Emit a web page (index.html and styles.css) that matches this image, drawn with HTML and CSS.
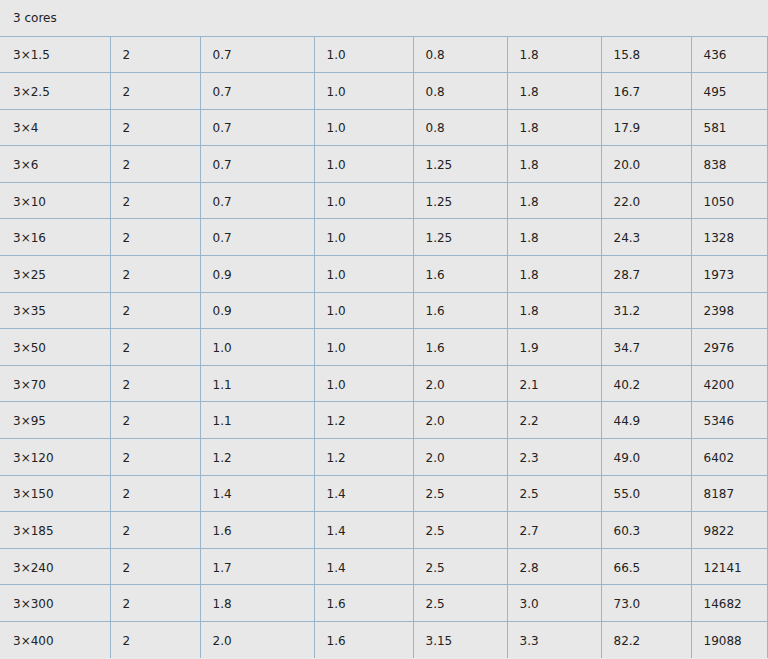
FILE: index.html
```html
<!DOCTYPE html>
<html>
<head>
<meta charset="utf-8">
<link rel="stylesheet" href="styles.css">
</head>
<body>
<table class="cable">
<colgroup>
<col class="c1"><col class="c2"><col class="c3"><col class="c4"><col class="c5"><col class="c6"><col class="c7"><col class="c8">
</colgroup>
<thead>
<tr class="head"><th colspan="8">3 cores</th></tr>
</thead>
<tbody>
<tr><td>3×1.5</td><td>2</td><td>0.7</td><td>1.0</td><td>0.8</td><td>1.8</td><td>15.8</td><td>436</td></tr>
<tr><td>3×2.5</td><td>2</td><td>0.7</td><td>1.0</td><td>0.8</td><td>1.8</td><td>16.7</td><td>495</td></tr>
<tr><td>3×4</td><td>2</td><td>0.7</td><td>1.0</td><td>0.8</td><td>1.8</td><td>17.9</td><td>581</td></tr>
<tr><td>3×6</td><td>2</td><td>0.7</td><td>1.0</td><td>1.25</td><td>1.8</td><td>20.0</td><td>838</td></tr>
<tr><td>3×10</td><td>2</td><td>0.7</td><td>1.0</td><td>1.25</td><td>1.8</td><td>22.0</td><td>1050</td></tr>
<tr><td>3×16</td><td>2</td><td>0.7</td><td>1.0</td><td>1.25</td><td>1.8</td><td>24.3</td><td>1328</td></tr>
<tr><td>3×25</td><td>2</td><td>0.9</td><td>1.0</td><td>1.6</td><td>1.8</td><td>28.7</td><td>1973</td></tr>
<tr><td>3×35</td><td>2</td><td>0.9</td><td>1.0</td><td>1.6</td><td>1.8</td><td>31.2</td><td>2398</td></tr>
<tr><td>3×50</td><td>2</td><td>1.0</td><td>1.0</td><td>1.6</td><td>1.9</td><td>34.7</td><td>2976</td></tr>
<tr><td>3×70</td><td>2</td><td>1.1</td><td>1.0</td><td>2.0</td><td>2.1</td><td>40.2</td><td>4200</td></tr>
<tr><td>3×95</td><td>2</td><td>1.1</td><td>1.2</td><td>2.0</td><td>2.2</td><td>44.9</td><td>5346</td></tr>
<tr><td>3×120</td><td>2</td><td>1.2</td><td>1.2</td><td>2.0</td><td>2.3</td><td>49.0</td><td>6402</td></tr>
<tr><td>3×150</td><td>2</td><td>1.4</td><td>1.4</td><td>2.5</td><td>2.5</td><td>55.0</td><td>8187</td></tr>
<tr><td>3×185</td><td>2</td><td>1.6</td><td>1.4</td><td>2.5</td><td>2.7</td><td>60.3</td><td>9822</td></tr>
<tr><td>3×240</td><td>2</td><td>1.7</td><td>1.4</td><td>2.5</td><td>2.8</td><td>66.5</td><td>12141</td></tr>
<tr><td>3×300</td><td>2</td><td>1.8</td><td>1.6</td><td>2.5</td><td>3.0</td><td>73.0</td><td>14682</td></tr>
<tr class="last"><td>3×400</td><td>2</td><td>2.0</td><td>1.6</td><td>3.15</td><td>3.3</td><td>82.2</td><td>19088</td></tr>
</tbody>
</table>
</body>
</html>
```
FILE: styles.css
```css
html, body {
  margin: 0;
  padding: 0;
  background: #e8e8e8;
}
.cable {
  border-collapse: collapse;
  table-layout: fixed;
  width: 767px;
  font-family: "DejaVu Sans", Verdana, sans-serif;
  font-size: 12px;
  color: #222;
  background: #e8e8e8;
}
.c1 { width: 110px; }
.c2 { width: 90px; }
.c3 { width: 114px; }
.c4 { width: 99px; }
.c5 { width: 94px; }
.c6 { width: 94px; }
.c7 { width: 90px; }
.c8 { width: 76px; }
.head th {
  text-align: left;
  font-weight: normal;
  height: 36px;
  box-sizing: border-box;
  padding: 1px 12px 0 13px;
  border-bottom: 1px solid #9ab4ca;
}
.cable td {
  height: 36.6px;
  box-sizing: border-box;
  padding: 2px 11px 0 12px;
  border: 1px solid #9ab4ca;
  border-left: none;
  vertical-align: middle;
}
.cable td:first-child {
  padding-left: 13px;
}
.cable .last td {
  border-bottom: none;
}
```
